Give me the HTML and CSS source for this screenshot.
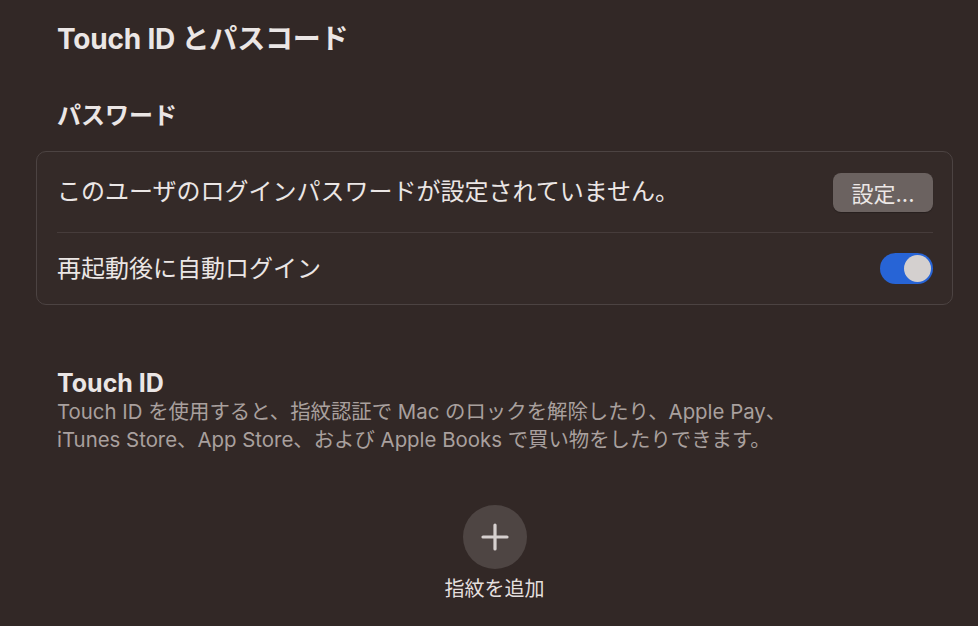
FILE: index.html
```html
<!DOCTYPE html>
<html lang="ja">
<head>
<meta charset="utf-8">
<link rel="stylesheet" href="styles.css">
</head>
<body>
<main class="page">
  <h1 class="title">Touch ID とパスコード</h1>
  <h2 class="section">パスワード</h2>
  <div class="box">
    <div class="row row-first">
      <span class="label">このユーザのログインパスワードが設定されていません。</span>
      <button class="btn">設定...</button>
    </div>
    <div class="sep"></div>
    <div class="row row-second">
      <span class="label">再起動後に自動ログイン</span>
      <span class="toggle"><span class="knob"></span></span>
    </div>
  </div>
  <h2 class="section touch">Touch ID</h2>
  <p class="desc">Touch ID を使用すると、指紋認証で Mac のロックを解除したり、Apple Pay、<br>iTunes Store、App Store、および Apple Books で買い物をしたりできます。</p>
  <div class="add">
    <div class="plus">
      <svg width="30" height="30" viewBox="0 0 30 30"><path d="M15 3V27M3 15H27" stroke="#d6d0cf" stroke-width="3.2" stroke-linecap="round"/></svg>
    </div>
    <div class="add-label">指紋を追加</div>
  </div>
</main>
</body>
</html>
```

FILE: styles.css
```css
html, body {
  margin: 0;
  padding: 0;
  background: #322826;
  height: 100%;
}
body {
  font-family: "Inter", "Noto Sans CJK JP", sans-serif;
  color: #ebe6e5;
  overflow: hidden;
}
.page {
  display: flex;
  flex-direction: column;
  padding: 0 25px 0 36px;
}
.title {
  margin: 22px 0 0 21px;
  font-size: 28px;
  line-height: 34px;
  font-weight: 700;
  letter-spacing: -0.2px;
}
.section {
  margin: 45px 0 0 21px;
  font-size: 24px;
  line-height: 30px;
  font-weight: 700;
}
.box {
  margin-top: 20px;
  border: 1px solid #4c4342;
  border-radius: 10px;
  background: #342a28;
  padding: 0 19px 0 20px;
}
.row {
  display: flex;
  align-items: center;
  justify-content: space-between;
}
.row-first { height: 80px; }
.row-second { height: 71px; }
.label {
  font-size: 24px;
  line-height: 30px;
}
.sep {
  height: 1px;
  background: #463c3b;
}
.btn {
  font-family: "Inter", "Noto Sans CJK JP", sans-serif;
  width: 100px;
  height: 39px;
  border: none;
  border-radius: 8px;
  background: #6b6260;
  color: #ece7e6;
  font-size: 22px;
  padding: 0;
  box-shadow: 0 1px 1px rgba(0,0,0,0.25);
}
.toggle {
  width: 53px;
  height: 31px;
  border-radius: 16px;
  background: #2764d6;
  display: flex;
  align-items: center;
  justify-content: flex-end;
  padding: 0 2px;
  box-sizing: border-box;
}
.knob {
  width: 27px;
  height: 27px;
  border-radius: 50%;
  background: #d4d0cf;
}
.touch {
  margin-top: 63px;
  font-size: 25px;
}
.desc {
  margin: 0 0 0 21px;
  font-size: 20.4px;
  line-height: 28px;
  color: #a9a09e;
}
.add {
  display: flex;
  flex-direction: column;
  align-items: center;
  margin-top: 51px;
}
.plus {
  width: 64px;
  height: 64px;
  border-radius: 50%;
  background: #4e4543;
  display: flex;
  align-items: center;
  justify-content: center;
}
.add-label {
  margin-top: 7px;
  font-size: 20px;
  line-height: 26px;
  color: #e4dfde;
}
```
